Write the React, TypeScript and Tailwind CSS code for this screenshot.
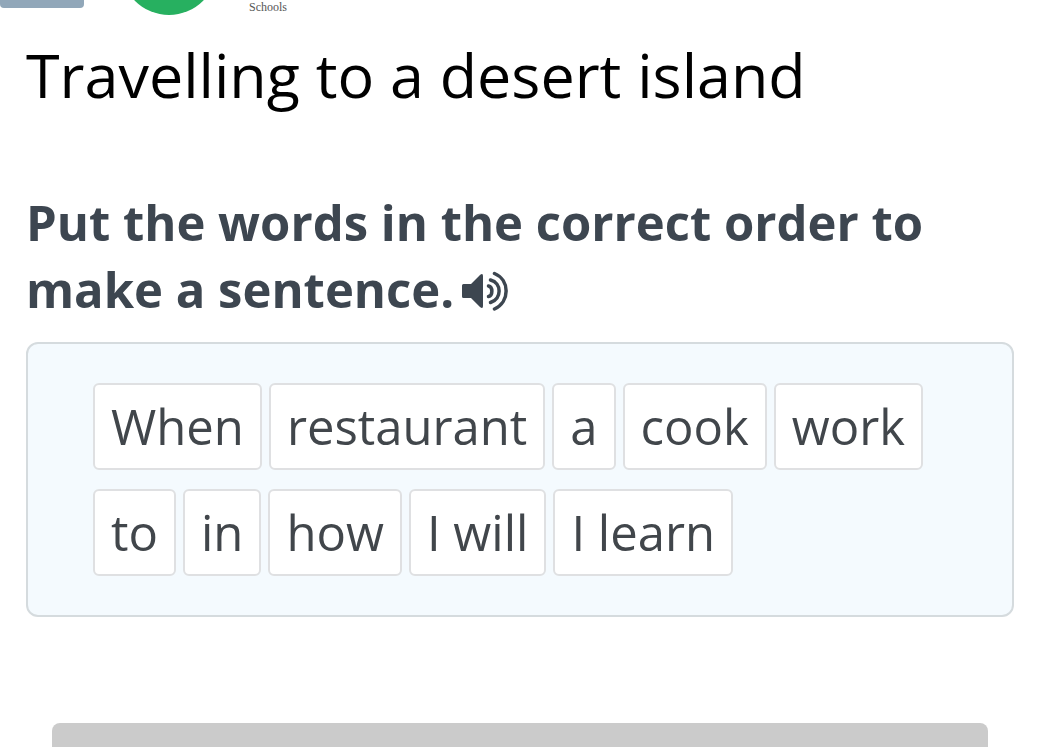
type WordTileProps = {
  word: string
}

const WORD_ROWS = [
  ['When', 'restaurant', 'a', 'cook', 'work'],
  ['to', 'in', 'how', 'I will', 'I learn'],
]

const Logo = () => (
  <svg viewBox="0 0 78 15" className="h-[15px] w-[78px]" aria-hidden="true">
    <circle cx="39" cy="-33" r="48" fill="#27b060" />
  </svg>
)

const SpeakerIcon = () => (
  <svg
    viewBox="0 0 46 40"
    className="h-10 w-[46px]"
    fill="none"
    stroke="currentColor"
    strokeWidth="3.500"
    strokeLinecap="round"
    aria-hidden="true"
  >
    <path
      d="M1.500 13H9L18 4Q21 1.500 21 5V35Q21 38.500 18 36L9 27H1.500Q0 27 0 25.500V14.500Q0 13 1.500 13Z"
      fill="currentColor"
      stroke="none"
    />
    <path d="M26.500 15C31 16 31 24.500 26.500 25.500" />
    <path d="M28.500 9C40 12 40 28 28.500 31.500" />
    <path d="M32.500 2.500C48 9 48 31 32.500 38" />
  </svg>
)

const WordTile = ({ word }: WordTileProps) => (
  <button
    type="button"
    className="h-[87px] rounded-md border-2 border-[#dfe0e2] bg-white px-4 text-[49px] leading-[83px] whitespace-nowrap text-[#41464b]"
  >
    {word}
  </button>
)

export default function App() {
  return (
    <div className="overflow-hidden bg-white font-['Open_Sans',sans-serif] text-[#3d4650]">
      <header className="flex h-[15px] items-start">
        <div className="h-2 w-[84px] rounded-b-sm bg-[#91a7b9]" />
        <div className="ml-[46px]">
          <Logo />
        </div>
        <span className="ml-[41px] font-['Liberation_Serif',serif] text-[12px] leading-[14px] text-[#555555]">
          Schools
        </span>
      </header>

      <main className="px-[26px]">
        <h1 className="mt-[15px] text-[61px] leading-[90px] text-black">
          Travelling to a desert island
        </h1>

        <h2 className="mt-[69px] text-[49px] leading-[67px] font-bold">
          Put the words in the correct order to make a sentence.
          <button
            type="button"
            aria-label="Listen"
            className="mb-2 ml-2 inline-block align-middle"
          >
            <SpeakerIcon />
          </button>
        </h2>

        <section className="mt-[19px] mr-[19px] flex flex-col gap-[19px] rounded-xl border-2 border-[#d5dbde] bg-[#f4fafe] px-[65px] py-[39px]">
          {WORD_ROWS.map((row) => (
            <div key={row[0]} className="flex gap-[7px]">
              {row.map((word) => (
                <WordTile key={word} word={word} />
              ))}
            </div>
          ))}
        </section>

        <div className="mt-[106px] mr-[45px] ml-[26px] h-6 rounded-t-lg bg-[#cbcbcb]" />
      </main>
    </div>
  )
}
